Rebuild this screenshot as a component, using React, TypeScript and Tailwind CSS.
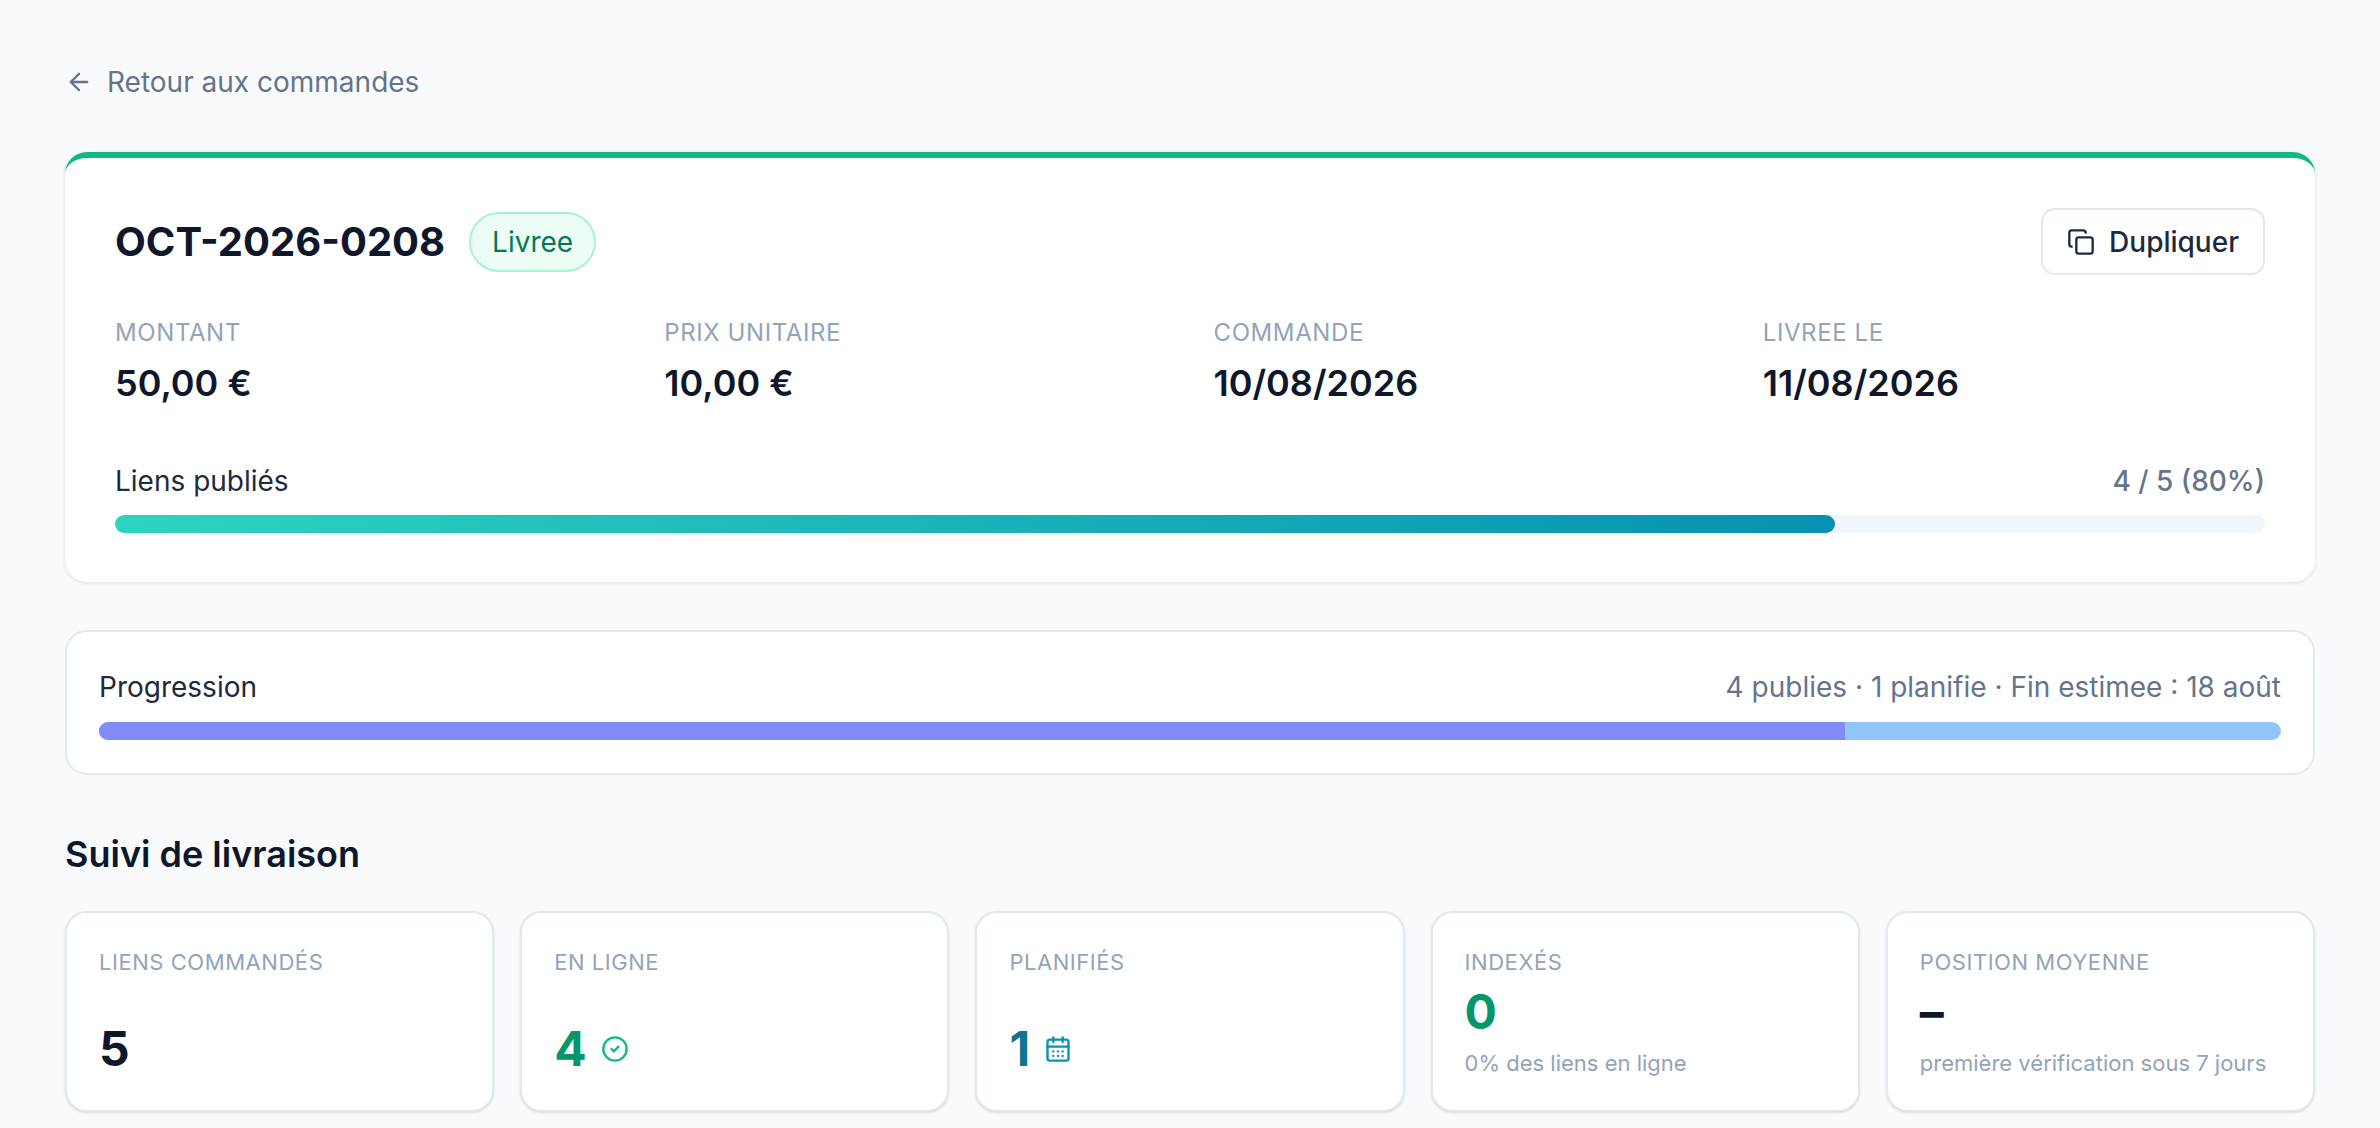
import { ArrowLeft, Copy, CircleCheck, CalendarDays } from "lucide-react";

const font = { fontFamily: "Inter, 'Liberation Sans', sans-serif" };

function Meta({ label, value }: { label: string; value: string }) {
  return (
    <div className="flex flex-col">
      <span className="text-[24px] uppercase leading-[32px] tracking-wide text-[#94a3b8]">{label}</span>
      <span className="mt-[12px] text-[36px] font-semibold leading-[44px] text-[#0f172a]">{value}</span>
    </div>
  );
}

function Stat({ label, children, sub }: { label: string; children: React.ReactNode; sub?: string }) {
  return (
    <div className="flex h-[201px] flex-col rounded-[22px] border-2 border-[#e2e8f0] bg-white px-[32px] pt-[34px] shadow-sm">
      <span className="text-[22px] uppercase leading-[30px] tracking-wide text-[#94a3b8]">{label}</span>
      {sub ? (
        <>
          <div className="mt-[7px] flex items-center">{children}</div>
          <span className="mt-[8px] text-[22px] leading-[30px] text-[#94a3b8]">{sub}</span>
        </>
      ) : (
        <div className="mt-[44px] flex items-center">{children}</div>
      )}
    </div>
  );
}

export default function App() {
  return (
    <div className="min-h-screen bg-[#f8fafc] px-[65px] pt-[62px]" style={font}>
      <a className="flex items-center gap-[14px] text-[28px] leading-[40px] text-[#64748b]">
        <ArrowLeft className="h-[28px] w-[28px]" strokeWidth={2} />
        Retour aux commandes
      </a>

      <div className="mt-[50px] overflow-hidden rounded-[22px] border-t-[6px] border-[#10b981] bg-white shadow-[0_1px_4px_rgba(15,23,42,0.12)]">
        <div className="px-[50px] pb-[49px] pt-[50px]">
          <div className="flex items-center justify-between">
            <div className="flex items-center gap-[24px]">
              <h1 className="text-[40px] font-bold leading-[52px] text-[#0f172a]">OCT-2026-0208</h1>
              <span className="rounded-full border-2 border-[#a7f3d0] bg-[#ecfdf5] px-[21px] py-[10px] text-[28px] leading-[36px] text-[#047857]">Livree</span>
            </div>
            <button className="flex h-[67px] items-center gap-[14px] rounded-[14px] border-2 border-[#e2e8f0] bg-white px-[24px] text-[28px] font-medium text-[#1e293b]">
              <Copy className="h-[28px] w-[28px]" strokeWidth={2} />
              Dupliquer
            </button>
          </div>
          <div className="mt-[42px] grid grid-cols-4 gap-x-[47px]">
            <Meta label="Montant" value="50,00 €" />
            <Meta label="Prix unitaire" value="10,00 €" />
            <Meta label="Commande" value="10/08/2026" />
            <Meta label="Livree le" value="11/08/2026" />
          </div>
          <div className="mt-[58px] flex items-center justify-between text-[28px] leading-[36px]">
            <span className="text-[#1e293b]">Liens publiés</span>
            <span className="font-medium text-[#64748b]">4 / 5 (80%)</span>
          </div>
          <div className="mt-[16px] h-[18px] rounded-full bg-[#f1f5f9]">
            <div className="h-full w-[80%] rounded-full bg-gradient-to-r from-[#2dd4bf] to-[#0891b2]" />
          </div>
        </div>
      </div>

      <div className="mt-[48px] rounded-[22px] border-2 border-[#e2e8f0] bg-white px-[32px] pb-[33px] pt-[37px]">
        <div className="flex items-center justify-between text-[28px] leading-[36px]">
          <span className="text-[#1e293b]">Progression</span>
          <span className="text-[#64748b]">4 publies · 1 planifie · Fin estimee : 18 août</span>
        </div>
        <div className="mt-[17px] flex h-[18px] overflow-hidden rounded-full bg-[#93c5fd]">
          <div className="h-full w-[80%] bg-[#818cf8]" />
        </div>
      </div>

      <h2 className="mt-[52px] text-[36px] font-semibold text-[#0f172a]">Suivi de livraison</h2>

      <div className="mt-[30px] grid grid-cols-5 gap-[26px]">
        <Stat label="Liens commandés">
          <span className="text-[48px] font-bold leading-[56px] text-[#0f172a]">5</span>
        </Stat>
        <Stat label="En ligne">
          <span className="text-[48px] font-bold leading-[56px] text-[#059669]">4</span>
          <CircleCheck className="ml-[14px] h-[28px] w-[28px] text-[#10b981]" strokeWidth={2} />
        </Stat>
        <Stat label="Planifiés">
          <span className="text-[48px] font-bold leading-[56px] text-[#0e7490]">1</span>
          <CalendarDays className="ml-[14px] h-[28px] w-[28px] text-[#0891b2]" strokeWidth={2} />
        </Stat>
        <Stat label="Indexés" sub="0% des liens en ligne">
          <span className="text-[48px] font-bold leading-[56px] text-[#059669]">0</span>
        </Stat>
        <Stat label="Position moyenne" sub="première vérification sous 7 jours">
          <span className="text-[48px] font-bold leading-[56px] text-[#0f172a]">–</span>
        </Stat>
      </div>
    </div>
  );
}
